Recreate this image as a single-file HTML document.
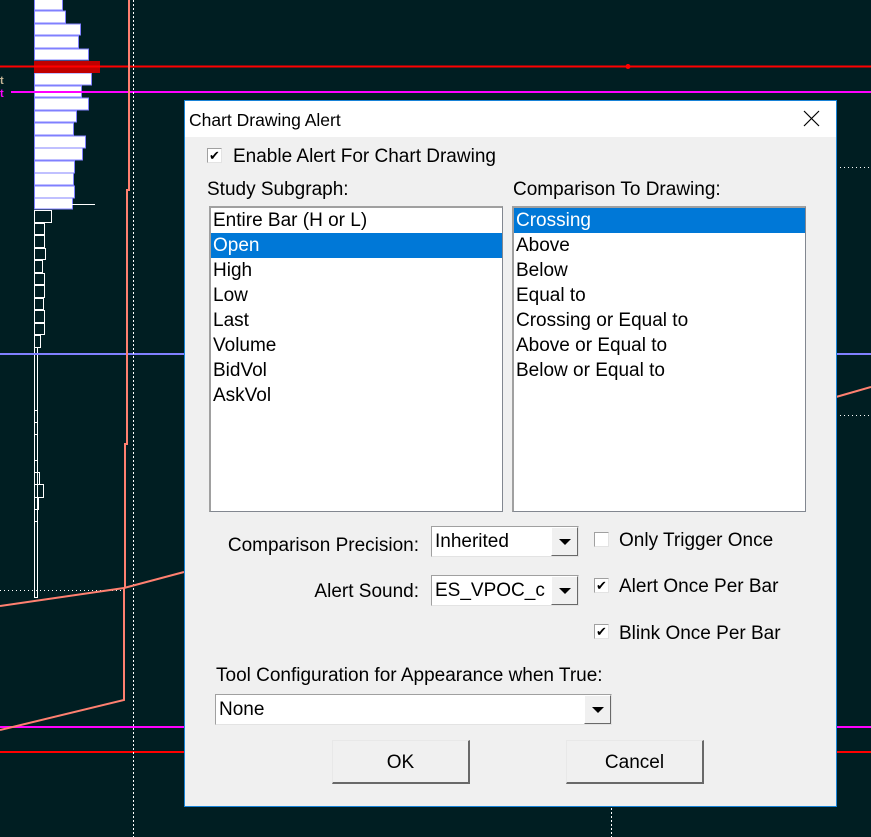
<!DOCTYPE html>
<html><head><meta charset="utf-8"><style>
*{margin:0;padding:0;box-sizing:border-box}
body{width:871px;height:837px;overflow:hidden;background:#001e22;position:relative;font-family:"Liberation Sans",Arial,sans-serif;color:#000}
.a{position:absolute}
.t{position:absolute;font-size:19px;line-height:24px;white-space:nowrap}
.list{position:absolute;background:#fff;border:1px solid #828790;border-top:2px solid #a0a0a0;border-left:2px solid #a0a0a0}
.list div{height:25px;line-height:26px;font-size:19px;padding-left:2px;white-space:nowrap}
.sel{background:#0078d7;color:#fff}
.combo{position:absolute;background:#fff;border:1px solid #a0a0a0;border-right-color:#e3e3e3;border-bottom-color:#e3e3e3;font-size:19px;line-height:29px;padding-left:3px;white-space:nowrap;overflow:hidden}
.btn{position:absolute;right:0;top:0;bottom:0;width:27px;background:#f0f0f0;border:1px solid #fff;border-right-color:#696969;border-bottom-color:#696969}
.btn:after{content:"";position:absolute;left:7px;top:11px;border-left:6px solid transparent;border-right:6px solid transparent;border-top:6px solid #000}
.cb{position:absolute;width:15px;height:15px;background:#fff;border:1px solid #a0a0a0;border-right-color:#e3e3e3;border-bottom-color:#e3e3e3;font-size:13px;line-height:13px;text-align:center}
.pb{position:absolute;background:#f0f0f0;border:1px solid #e8e8e8;border-right:2px solid #696969;border-bottom:2px solid #696969;font-size:19px;text-align:center;line-height:43px}
</style></head><body>
<svg class="a" style="left:0;top:0" width="871" height="837">
<g fill="#fff" stroke="#8080ff" stroke-width="1">
<rect x="34.5" y="-1" width="28" height="11"/><rect x="34.5" y="11" width="31" height="12"/><rect x="34.5" y="24" width="46" height="11"/><rect x="34.5" y="36" width="44" height="12"/><rect x="34.5" y="49" width="54" height="11"/>
<rect x="34.5" y="73" width="57" height="12"/><rect x="34.5" y="86" width="47" height="11"/><rect x="34.5" y="98" width="54" height="12"/><rect x="34.5" y="111" width="42" height="11"/><rect x="34.5" y="123" width="39" height="12"/><rect x="34.5" y="136" width="51" height="12"/><rect x="34.5" y="148" width="48" height="12"/><rect x="34.5" y="161" width="40" height="12"/><rect x="34.5" y="173" width="39" height="12"/><rect x="34.5" y="186" width="40" height="12"/><rect x="34.5" y="198" width="38" height="11"/>
</g>
<rect x="34" y="61" width="66" height="12" fill="#c00000"/>
<line x1="72" y1="204.5" x2="95" y2="204.5" stroke="#fff"/>
<g fill="none" stroke="#fff" stroke-width="1">
<rect x="34.5" y="210.5" width="17" height="12"/><rect x="34.5" y="223.5" width="10" height="11"/><rect x="34.5" y="235.5" width="10" height="12"/><rect x="34.5" y="248.5" width="11" height="11"/><rect x="34.5" y="260.5" width="8" height="12"/><rect x="34.5" y="273.5" width="10" height="11"/><rect x="34.5" y="285.5" width="10" height="12"/><rect x="34.5" y="298.5" width="9" height="11"/><rect x="34.5" y="310.5" width="10" height="12"/><rect x="34.5" y="323.5" width="10" height="11"/><rect x="34.5" y="335.5" width="6" height="12"/>
<rect x="34.5" y="347.5" width="3" height="250"/>
<rect x="34.5" y="410.5" width="3" height="12"/><rect x="34.5" y="422.5" width="3" height="12"/><rect x="34.5" y="460.5" width="3" height="12"/><rect x="34.5" y="472.5" width="5" height="12"/><rect x="34.5" y="484.5" width="9" height="13"/><rect x="34.5" y="497.5" width="4" height="12"/><rect x="34.5" y="509.5" width="3" height="12"/>
</g>
<line x1="0" y1="66.5" x2="871" y2="66.5" stroke="#ff0000" stroke-width="2"/>
<circle cx="628" cy="66.5" r="2.5" fill="#ff0000"/>
<line x1="11" y1="92" x2="871" y2="92" stroke="#ff00ff" stroke-width="2"/>
<text x="0" y="84" fill="#c8b898" font-size="11" font-weight="bold">t</text>
<text x="0" y="97" fill="#ff00ff" font-size="11" font-weight="bold">t</text>
<line x1="0" y1="354" x2="871" y2="354" stroke="#8080ff" stroke-width="2"/>
<line x1="0" y1="727" x2="871" y2="727" stroke="#ff00ff" stroke-width="2"/>
<line x1="0" y1="752" x2="871" y2="752" stroke="#ff0000" stroke-width="2"/>
<line x1="133.5" y1="0" x2="133.5" y2="837" stroke="#fff" stroke-dasharray="2,2"/>
<line x1="611.5" y1="800" x2="611.5" y2="837" stroke="#fff" stroke-dasharray="2,2"/>
<polyline points="129,0 129,190 127,190 127,444 125,444 125,588" fill="none" stroke="#ff8070" stroke-width="2"/>
<line x1="0" y1="590.5" x2="124" y2="590.5" stroke="#fff" stroke-dasharray="1,3"/>
<polyline points="0,606 124,588 184,572" fill="none" stroke="#ff8070" stroke-width="2"/>
<polyline points="0,730 124,700 124,588" fill="none" stroke="#ff8070" stroke-width="2"/>
<polyline points="836,397 871,387" fill="none" stroke="#ff8070" stroke-width="2"/>
<line x1="836" y1="167.5" x2="871" y2="167.5" stroke="#fff" stroke-dasharray="1,3"/>
<line x1="836" y1="415.5" x2="871" y2="415.5" stroke="#fff" stroke-dasharray="1,3"/>
</svg>

<div class="a" style="left:184px;top:100px;width:653px;height:707px;background:#f0f0f0;border:1px solid #1883d7">
<div class="a" style="left:0;top:0;width:651px;height:36px;background:#fff"></div>
</div>
<div class="t" style="left:189px;top:108px;font-size:17.5px">Chart Drawing Alert</div>
<svg class="a" style="left:803px;top:110px" width="17" height="17"><path d="M1 1L16 16M16 1L1 16" stroke="#000" stroke-width="1.2"/></svg>

<div class="cb" style="left:207px;top:148px">✔</div>
<div class="t" style="left:233px;top:145px">Enable Alert For Chart Drawing</div>
<div class="t" style="left:207px;top:178px">Study Subgraph:</div>
<div class="t" style="left:513px;top:178px">Comparison To Drawing:</div>

<div class="list" style="left:209px;top:206px;width:294px;height:306px">
<div>Entire Bar (H or L)</div><div class="sel">Open</div><div>High</div><div>Low</div><div>Last</div><div>Volume</div><div>BidVol</div><div>AskVol</div>
</div>
<div class="list" style="left:512px;top:206px;width:294px;height:306px">
<div class="sel">Crossing</div><div>Above</div><div>Below</div><div>Equal to</div><div>Crossing or Equal to</div><div>Above or Equal to</div><div>Below or Equal to</div>
</div>

<div class="t" style="right:452px;top:534px">Comparison Precision:</div>
<div class="combo" style="left:431px;top:526px;width:148px;height:31px">Inherited<div class="btn"></div></div>
<div class="t" style="right:452px;top:580px">Alert Sound:</div>
<div class="combo" style="left:431px;top:575px;width:148px;height:31px">ES_VPOC_c<div class="btn"></div></div>

<div class="cb" style="left:594px;top:532px"></div>
<div class="t" style="left:619px;top:529px">Only Trigger Once</div>
<div class="cb" style="left:594px;top:578px">✔</div>
<div class="t" style="left:619px;top:575px">Alert Once Per Bar</div>
<div class="cb" style="left:594px;top:624px">✔</div>
<div class="t" style="left:619px;top:622px">Blink Once Per Bar</div>

<div class="t" style="left:216px;top:664px">Tool Configuration for Appearance when True:</div>
<div class="combo" style="left:215px;top:694px;width:397px;height:31px">None<div class="btn"></div></div>

<div class="pb" style="left:332px;top:740px;width:138px;height:44px">OK</div>
<div class="pb" style="left:566px;top:740px;width:138px;height:44px">Cancel</div>
</body></html>
